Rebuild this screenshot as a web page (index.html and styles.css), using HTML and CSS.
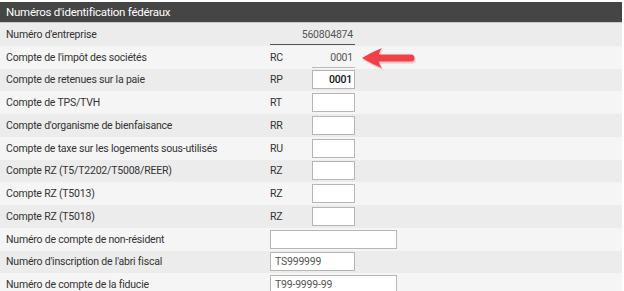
FILE: index.html
```html
<!DOCTYPE html>
<html lang="fr">
<head>
    <meta charset="UTF-8">
    <title>Numéros d'identification fédéraux</title>
    <link rel="stylesheet" href="styles.css">
</head>
<body>
    <div class="panel">
        <div class="panel-title">Numéros d'identification fédéraux</div>

        <div class="row">
            <span class="label">Numéro d'entreprise</span>
            <span class="readonly wide">560804874</span>
        </div>
        <div class="row">
            <span class="label">Compte de l'impôt des sociétés</span>
            <span class="code">RC</span>
            <span class="readonly small light">0001</span>
            <svg class="arrow" width="58" height="24" viewBox="0 0 58 24">
                <path d="M2 11 Q12 5 22 1 Q19 5 19 7.5 L51 7.5 A3.5 3.5 0 0 1 51 14.5 L19 14.5 Q19 17 22 21 Q12 17 2 11 Z" fill="#b44" opacity="0.25" transform="translate(1 2)"/>
                <path d="M2 11 Q12 5 22 1 Q19 5 19 7.5 L51 7.5 A3.5 3.5 0 0 1 51 14.5 L19 14.5 Q19 17 22 21 Q12 17 2 11 Z" fill="#f2404a"/>
            </svg>
        </div>
        <div class="row">
            <span class="label">Compte de retenues sur la paie</span>
            <span class="code">RP</span>
            <input class="field small strong" type="text" value="0001">
        </div>
        <div class="row">
            <span class="label">Compte de TPS/TVH</span>
            <span class="code">RT</span>
            <input class="field small" type="text">
        </div>
        <div class="row">
            <span class="label">Compte d'organisme de bienfaisance</span>
            <span class="code">RR</span>
            <input class="field small" type="text">
        </div>
        <div class="row">
            <span class="label">Compte de taxe sur les logements sous-utilisés</span>
            <span class="code">RU</span>
            <input class="field small" type="text">
        </div>
        <div class="row">
            <span class="label">Compte RZ (T5/T2202/T5008/REER)</span>
            <span class="code">RZ</span>
            <input class="field small" type="text">
        </div>
        <div class="row">
            <span class="label">Compte RZ (T5013)</span>
            <span class="code">RZ</span>
            <input class="field small" type="text">
        </div>
        <div class="row">
            <span class="label">Compte RZ (T5018)</span>
            <span class="code">RZ</span>
            <input class="field small" type="text">
        </div>
        <div class="row">
            <span class="label">Numéro de compte de non-résident</span>
            <input class="field long" type="text">
        </div>
        <div class="row">
            <span class="label">Numéro d'inscription de l'abri fiscal</span>
            <input class="field medium" type="text" value="TS999999">
        </div>
        <div class="row">
            <span class="label">Numéro de compte de la fiducie</span>
            <input class="field long" type="text" value="T99-9999-99">
        </div>
    </div>
</body>
</html>
```

FILE: styles.css
```css
body {
    margin: 0;
    padding-top: 2px;
    background-color: #fff;
    font-family: Roboto, sans-serif;
    font-size: 10.5px;
    letter-spacing: -0.2px;
    color: #333;
}
.panel {
    width: 622px;
}
.panel-title {
    background-color: #454545;
    color: #fff;
    height: 20px;
    line-height: 20px;
    padding-left: 6px;
    font-size: 11.5px;
    letter-spacing: -0.25px;
    border-bottom: 1px solid #c9c9c9;
}
.row {
    height: 22.75px;
    display: flex;
    align-items: center;
    padding-left: 6px;
    background-color: #f5f5f5;
}
.row:nth-child(even) {
    background-color: #ececec;
}
.label {
    width: 264px;
    flex-shrink: 0;
}
.code {
    width: 42px;
    flex-shrink: 0;
}
.readonly {
    box-sizing: border-box;
    text-align: right;
    color: #555;
    padding: 0 2px 2px 0;
    border-bottom: 1px solid #555;
    line-height: 15px;
    margin-top: 3px;
}
.readonly.wide {
    width: 85px;
}
.readonly.small {
    width: 43px;
}
.readonly.light {
    border-bottom-color: #bbb;
}
.arrow {
    margin-left: 5px;
    margin-top: 4px;
}
.field {
    box-sizing: border-box;
    height: 19px;
    border: 1px solid #b5b5b5;
    background-color: #fff;
    font-family: Roboto, sans-serif;
    font-size: 10.5px;
    letter-spacing: -0.2px;
    color: #555;
    padding: 0 4px;
    margin: 0;
    outline: none;
}
.field.small {
    width: 43px;
    text-align: right;
    padding-right: 2px;
}
.field.strong {
    color: #111;
    font-weight: 500;
}
.field.medium {
    width: 85px;
}
.field.long {
    width: 127px;
}
```
